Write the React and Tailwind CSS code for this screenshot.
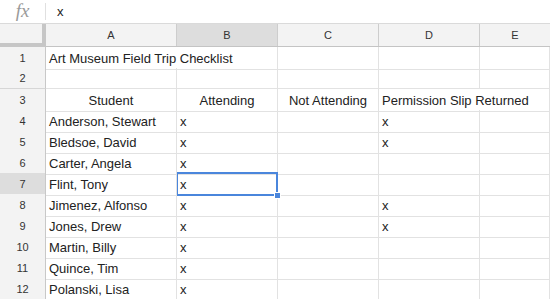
import React from "react";

const COLS = "grid grid-cols-[46px_131px_101px_101px_101px_1fr]";

const rows = [
  { n: 1, a: "Art Museum Field Trip Checklist", overflowA: true },
  { n: 2 },
  { n: 3, a: "Student", b: "Attending", c: "Not Attending", d: "Permission Slip Returned", center: true, overflowD: true },
  { n: 4, a: "Anderson, Stewart", b: "x", d: "x" },
  { n: 5, a: "Bledsoe, David", b: "x", d: "x" },
  { n: 6, a: "Carter, Angela", b: "x" },
  { n: 7, a: "Flint, Tony", b: "x", selected: true },
  { n: 8, a: "Jimenez, Alfonso", b: "x", d: "x" },
  { n: 9, a: "Jones, Drew", b: "x", d: "x" },
  { n: 10, a: "Martin, Billy", b: "x" },
  { n: 11, a: "Quince, Tim", b: "x" },
  { n: 12, a: "Polanski, Lisa", b: "x" },
];

function Cell({ children, center, noRight, className = "" }) {
  return (
    <div
      className={`relative h-full border-b border-[#e2e2e2] ${noRight ? "border-r border-r-transparent" : "border-r border-r-[#e2e2e2]"} flex items-center pt-[2px] ${center ? "justify-center" : "pl-[3px]"} whitespace-nowrap overflow-visible text-[13px] text-[#222] ${className}`}
    >
      {children}
    </div>
  );
}

export default function App() {
  return (
    <div className="w-[550px] h-[299px] overflow-hidden bg-white font-['Liberation_Sans',Arial,sans-serif]">
      {/* formula bar */}
      <div className="h-[24px] flex items-center border-b border-[#dadada]">
        <div className="w-[45px] flex justify-center">
          <span className="font-['Liberation_Serif',serif] italic text-[19px] leading-none text-[#9a9a9a] -mt-[2px]">fx</span>
        </div>
        <div className="w-px h-[17px] bg-[#e0e0e0]" />
        <div className="pl-[11px] text-[13px] text-[#222]">x</div>
      </div>
      {/* column header */}
      <div className={`${COLS} h-[23px] bg-[#f3f3f3] border-b border-[#c4c4c4] text-[11px] text-[#333]`}>
        <div className="h-[23px] -mb-px bg-[#f3f3f3] border-r-4 border-b-4 border-[#c6c6c6]" />
        <div className="flex items-center justify-center border-r border-[#cdcdcd]">A</div>
        <div className="flex items-center justify-center border-r border-[#cdcdcd] bg-[#dddddd]">B</div>
        <div className="flex items-center justify-center border-r border-[#cdcdcd]">C</div>
        <div className="flex items-center justify-center border-r border-[#cdcdcd]">D</div>
        <div className="flex items-center justify-center">E</div>
      </div>
      {rows.map((r) => (
        <div key={r.n} className={`${COLS} h-[21px]`}>
          <div
            className={`flex items-center justify-center pt-[1px] border-r border-r-[#c8c8c8] border-b border-b-[#d6d6d6] text-[11px] text-[#333] ${r.selected ? "bg-[#dddddd]" : "bg-[#f3f3f3]"}`}
          >
            {r.n}
          </div>
          <Cell center={r.center} noRight={r.overflowA} className="z-10">
            {r.a}
          </Cell>
          <Cell center={r.center}>
            {r.b}
            {r.selected && (
              <>
                <div className="absolute -left-px -top-[1px] -right-px -bottom-[1px] border-2 border-[#4a86dc] pointer-events-none" />
                <div className="absolute -right-[4px] -bottom-[4px] w-[7px] h-[7px] bg-[#4a86dc] border border-white z-20" />
              </>
            )}
          </Cell>
          <Cell center={r.center}>{r.c}</Cell>
          <Cell noRight={r.overflowD} className="z-10">{r.d}</Cell>
          <Cell />
        </div>
      ))}
    </div>
  );
}
